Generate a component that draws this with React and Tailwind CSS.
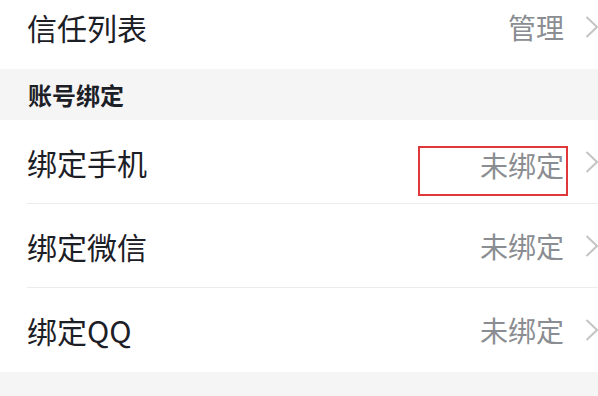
import React from 'react';

const Chevron = () => (
  <svg width="14" height="24" viewBox="0 0 14 24" className="ml-[21px] shrink-0 -mr-[1px]">
    <path d="M1.5 2 L12 12 L1.5 22" fill="none" stroke="#c4c4c4" strokeWidth="2" />
  </svg>
);

const Row = ({ label, value, highlight, divider }) => (
  <div className="bg-white pl-[27px]">
    <div className={`flex items-center h-[84px] ${divider ? 'border-b border-[#ececec]' : ''}`}>
      <span className="flex-1 text-[30px] text-[#1c2026] leading-none">{label}</span>
      <div className="flex items-center">
        <span
          className={`relative text-[28px] text-[#8a8d91] leading-none ${highlight ? 'translate-y-[3px]' : ''}`}
        >
          {value}
          {highlight && (
            <span className="absolute left-[-62px] right-[-4px] top-[-5px] h-[50px] border-2 border-[#e0383a]" />
          )}
        </span>
        <Chevron />
      </div>
    </div>
  </div>
);

const App = () => {
  return (
    <div
      className="w-[598px] h-[396px] overflow-hidden bg-[#f5f5f5]"
      style={{ fontFamily: '"Noto Sans CJK SC", "Noto Sans", sans-serif' }}
    >
      <div className="-mt-[15px]">
        <Row label="信任列表" value="管理" />
      </div>
      <div className="h-[51px] flex items-center pl-[28px]">
        <span className="text-[24px] font-bold text-[#1c2026] leading-none">账号绑定</span>
      </div>
      <Row label="绑定手机" value="未绑定" highlight divider />
      <Row label="绑定微信" value="未绑定" divider />
      <Row label="绑定QQ" value="未绑定" />
    </div>
  );
};

export default App;
